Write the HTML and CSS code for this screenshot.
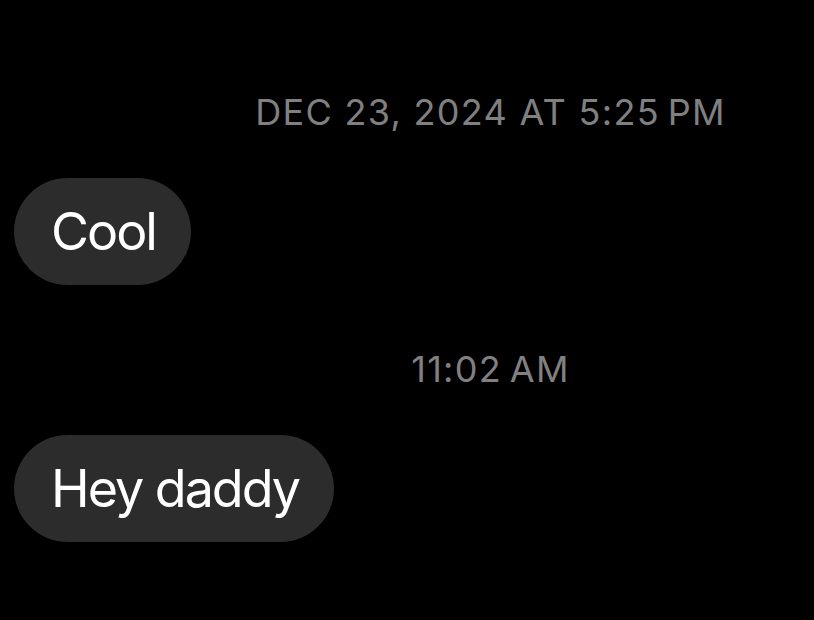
FILE: index.html
```html
<!DOCTYPE html>
<html lang="en">
<head>
  <meta charset="UTF-8">
  <meta name="viewport" content="width=device-width, initial-scale=1.0">
  <title>Messages</title>
  <link rel="stylesheet" href="styles.css">
</head>
<body>
  <div class="thread">
    <div class="stamp">DEC 23, 2024 AT 5:25&#8239;PM</div>
    <div class="bubble">Cool</div>

    <div class="stamp">11:02&#8239;AM</div>
    <div class="bubble">Hey daddy</div>
  </div>
</body>
</html>
```

FILE: styles.css
```css
html, body {
  margin: 0;
  background: #000;
  overflow: hidden;
}

body {
  font-family: 'Inter', 'Liberation Sans', sans-serif;
  color: #fff;
}

.thread {
  padding: 90px 0 0 14px;
  display: flex;
  flex-direction: column;
  align-items: flex-start;
}

.stamp {
  align-self: stretch;
  margin-left: 153px;
  text-align: center;
  font-size: 36px;
  line-height: 44px;
  letter-spacing: 1.3px;
  color: #808080;
  margin-bottom: 44px;
}

.bubble + .stamp {
  margin-top: 62px;
}

.bubble {
  background: #2c2c2c;
  border-radius: 54px;
  padding: 22px 35px 22px 37px;
  font-size: 52px;
  line-height: 63px;
  letter-spacing: -2px;
  white-space: nowrap;
}
```
